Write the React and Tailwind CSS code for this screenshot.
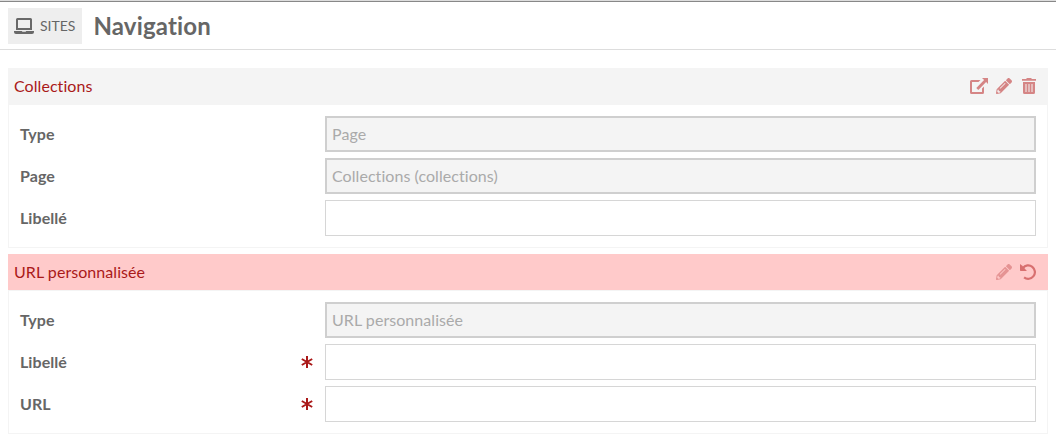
import React from 'react';

function LaptopIcon() {
  return (
    <svg className="h-4 w-5" viewBox="0 0 20 16" fill="#686868">
      <path fillRule="evenodd" d="M3.5 0h13A1.5 1.5 0 0 1 18 1.5V12H2V1.5A1.5 1.5 0 0 1 3.5 0ZM4 2v8h12V2Z" />
      <path d="M0 13h7.8c.1.5.4.7.8.7h2.8c.4 0 .7-.2.8-.7H20v1a2 2 0 0 1-2 2H2a2 2 0 0 1-2-2Z" />
    </svg>
  );
}

function ExternalIcon() {
  return (
    <svg className="h-4 w-[18px]" viewBox="0 0 18 16" fill="#d58585">
      <path d="M12 0H18v6l-1.900-1.900-7.800 7.800-2-2 7.800-7.800Z" />
      <path d="M10.500 2H1.500A1.500 1.500 0 0 0 0 3.500v11A1.500 1.500 0 0 0 1.500 16h11a1.500 1.500 0 0 0 1.500-1.500V8.500l-2 2V14H2V4h6.500Z" />
    </svg>
  );
}

function PencilIcon({ className }) {
  return (
    <svg className={`size-4 ${className}`} viewBox="0 0 512 512" fill="currentColor">
      <path d="M497.900 142.100l-46.100 46.100c-4.700 4.700-12.300 4.700-17 0l-111-111c-4.700-4.700-4.700-12.300 0-17l46.100-46.100c18.700-18.700 49.100-18.700 67.900 0l60.100 60.100c18.800 18.700 18.800 49.100 0 67.900zM284.200 99.800L21.600 362.400.4 483.900c-2.900 16.400 11.400 30.600 27.800 27.800l121.500-21.300 262.600-262.600c4.700-4.700 4.700-12.300 0-17l-111-111c-4.800-4.700-12.400-4.700-17.100 0zM124.100 339.900c-5.500-5.500-5.500-14.300 0-19.800l154-154c5.500-5.500 14.300-5.500 19.800 0s5.500 14.300 0 19.800l-154 154c-5.500 5.500-14.300 5.500-19.800 0zM88 424h48v36.300l-64.500 11.300-31.100-31.100L51.700 376H88v48z" />
    </svg>
  );
}

function TrashIcon() {
  return (
    <svg className="h-4 w-3.5" viewBox="0 0 14 16" fill="#d58585">
      <path d="M0 1h4.200l.4-.7A.6.6 0 0 1 5.100 0h3.800c.2 0 .4.100.5.300l.4.700H14v1.800H0Z" />
      <path fillRule="evenodd" d="M1 4h12v10.500a1.500 1.500 0 0 1-1.500 1.500h-9A1.500 1.500 0 0 1 1 14.500ZM3.500 6v8h1V6Zm3 0v8h1V6Zm3 0v8h1V6Z" />
    </svg>
  );
}

function UndoIcon() {
  return (
    <svg className="size-4" viewBox="0 0 16 16">
      <path d="M0 0 2 1.500 6.900 6.900H.7a.7.7 0 0 1-.7-.7Z" fill="#d87070" />
      <path d="M2.900 4A6.700 6.700 0 1 1 4.100 13.400" fill="none" stroke="#d87070" strokeWidth="2.200" />
    </svg>
  );
}

function RequiredMark() {
  return (
    <svg className="mr-3 size-3" viewBox="0 0 12 12" fill="none" stroke="#aa1919" strokeWidth="2">
      <path d="M6 0v12M.8 3l10.400 6M11.200 3l-10.400 6" />
    </svg>
  );
}

function Field({ label, value, required }) {
  return (
    <div className="flex h-9 items-center">
      <div className="flex w-[305px] shrink-0 items-center justify-between">
        <label className="font-bold">{label}</label>
        {required && <RequiredMark />}
      </div>
      {value ? (
        <div className="flex h-9 flex-1 items-center border-2 border-[#cfcfcf] bg-[#f4f4f4] px-[5px] text-[#aaaaaa]">{value}</div>
      ) : (
        <input aria-label={label} className="h-9 min-w-0 flex-1 border border-[#d6d6d6] bg-white px-1.5 outline-none" />
      )}
    </div>
  );
}

function Panel({ title, headerClass, actions, children }) {
  return (
    <section>
      <header className={`flex h-9 items-center justify-between pl-1.5 text-[#aa1919] ${headerClass}`}>
        <span>{title}</span>
        <div className="flex items-center">{actions}</div>
      </header>
      <div className="flex flex-col gap-1.5 border border-[#f4f4f4] px-[11px] py-[11px]">{children}</div>
    </section>
  );
}

export default function App() {
  return (
    <div className="h-[445px] overflow-hidden bg-white font-['Lato',sans-serif] text-base leading-6 tracking-[0.06px] text-[#666666] [font-variant-ligatures:none]">
      <div className="h-0.5 border-t border-b border-t-[#dddddd] border-b-[#888888]" />
      <header className="flex h-12 items-center border-b border-[#dddddd] px-2">
        <div className="flex h-9 w-[74px] items-center bg-[#eeeeee] pl-1.5">
          <LaptopIcon />
          <span className="ml-1.5 text-sm tracking-normal">SITES</span>
        </div>
        <h1 className="ml-[11.5px] text-2xl font-bold tracking-[0.15px]">Navigation</h1>
      </header>
      <main className="flex flex-col gap-1.5 px-2 pt-[18px]">
        <Panel
          title="Collections"
          headerClass="bg-[#f4f4f4] pr-3"
          actions={
            <>
              <ExternalIcon />
              <PencilIcon className="ml-2 text-[#d58585]" />
              <span className="ml-2.5"><TrashIcon /></span>
            </>
          }
        >
          <Field label="Type" value="Page" />
          <Field label="Page" value="Collections (collections)" />
          <Field label="Libellé" />
        </Panel>
        <Panel
          title="URL personnalisée"
          headerClass="bg-[#ffcaca] pr-3"
          actions={
            <>
              <PencilIcon className="text-[#e59393]" />
              <span className="ml-2"><UndoIcon /></span>
            </>
          }
        >
          <Field label="Type" value="URL personnalisée" />
          <Field label="Libellé" required />
          <Field label="URL" required />
        </Panel>
      </main>
    </div>
  );
}
